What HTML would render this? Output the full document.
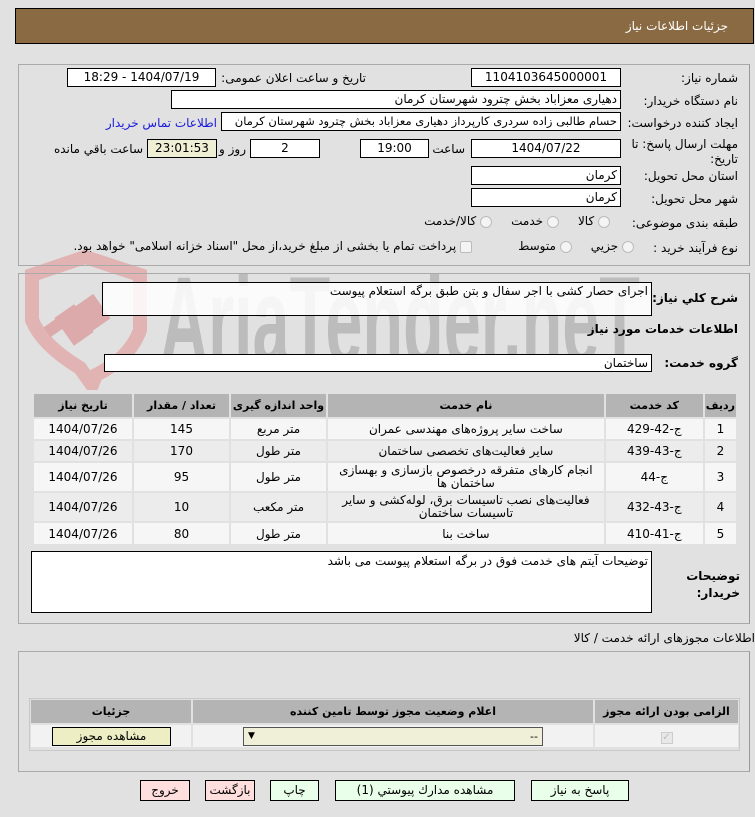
<!DOCTYPE html>
<html><head><meta charset="utf-8"><style>
*{box-sizing:border-box}
body{margin:0;width:755px;height:817px;background:#e1e1e1;font-family:Tahoma,"DejaVu Sans","Liberation Sans",sans-serif;font-size:11px;color:#000;position:relative;overflow:hidden}
.a{position:absolute}
.box{position:absolute;background:#fff;border:1px solid #000;height:19px;line-height:17px;padding:0 3px;direction:rtl;white-space:nowrap;overflow:hidden;font-size:12px}
.c{text-align:center}
.l{position:absolute;direction:rtl;white-space:nowrap;text-align:right;font-size:12px}
.panel{position:absolute;border:1px solid #aaa;border-right-color:#999;left:18px;width:732px}
.b{font-weight:bold}
table{border-collapse:separate;border-spacing:2px;position:absolute;direction:rtl}
th{background:#b4b4b4;font-weight:bold;font-size:11px;height:23px}
td{text-align:center;font-size:12px}
.btn{position:absolute;border:1px solid #000;height:21px;line-height:19px;text-align:center;background:#eaffea;direction:rtl;font-size:12px}
.rad{display:inline-block;width:12px;height:12px;border:1px solid #bbb;border-radius:50%;background:#f4f4f4;vertical-align:middle;position:relative}
</style></head><body>
<div class="a" style="left:15px;top:8px;width:739px;height:36px;background:#8a6a43;border:1px solid #000"></div>
<div class="l" style="right:27px;top:19px;color:#fff;font-size:12px">جزئیات اطلاعات نیاز</div>

<!-- watermark -->
<svg class="a" style="left:0;top:250px" width="700" height="140">
<path d="M32 25 L85 7 L140 25 L140 80 Q130 108 96 125 L92 135 L80 118 Q42 95 32 70 Z" fill="none" stroke="#e2aaaa" stroke-width="14" opacity="0.85"/>
<rect x="45" y="70" width="22" height="12" fill="#dcaaaa" transform="rotate(-35 56 76)"/>
<rect x="62" y="58" width="24" height="34" fill="#dcaaaa" transform="rotate(-35 74 75)"/>
<rect x="80" y="48" width="24" height="30" fill="#dcaaaa" transform="rotate(-35 92 63)"/>
<text x="160" y="114" font-family="Liberation Sans Narrow, Liberation Sans, sans-serif" font-size="125" font-weight="bold" fill="#b4b4b4" opacity="0.8" textLength="480" lengthAdjust="spacingAndGlyphs">AriaTender.neT</text>
</svg>

<div class="panel" style="top:64px;height:202px"></div>
<div class="l" style="right:17px;top:71px">شماره نیاز:</div>
<div class="box c" style="left:471px;top:68px;width:150px">1104103645000001</div>
<div class="l" style="right:389px;top:71px">تاریخ و ساعت اعلان عمومی:</div>
<div class="box c" style="left:67px;top:68px;width:149px">1404/07/19 - 18:29</div>
<div class="l" style="right:17px;top:94px">نام دستگاه خریدار:</div>
<div class="box" style="left:171px;top:90px;width:450px">دهیاری معزاباد بخش چترود شهرستان کرمان</div>
<div class="l" style="right:17px;top:116px">ایجاد کننده درخواست:</div>
<div class="box" style="left:221px;top:112px;width:400px;font-size:11.5px">حسام طالبی زاده سردری کارپرداز دهیاری معزاباد بخش چترود شهرستان کرمان</div>
<div class="l" style="right:538px;top:116px;color:#1a1adc">اطلاعات تماس خریدار</div>
<div class="l" style="right:17px;top:137px;line-height:15px">مهلت ارسال پاسخ: تا<br>تاریخ:</div>
<div class="box c" style="left:471px;top:139px;width:150px">1404/07/22</div>
<div class="l" style="right:290px;top:142px">ساعت</div>
<div class="box c" style="left:360px;top:139px;width:69px">19:00</div>
<div class="box c" style="left:250px;top:139px;width:70px">2</div>
<div class="l" style="right:509px;top:142px">روز و</div>
<div class="box c" style="left:147px;top:139px;width:70px;background:#efefd6">23:01:53</div>
<div class="l" style="right:612px;top:142px">ساعت باقي مانده</div>
<div class="l" style="right:17px;top:169px">استان محل تحویل:</div>
<div class="box" style="left:471px;top:166px;width:150px">کرمان</div>
<div class="l" style="right:17px;top:192px">شهر محل تحویل:</div>
<div class="box" style="left:471px;top:188px;width:150px">کرمان</div>
<div class="l" style="right:17px;top:216px">طبقه بندی موضوعی:</div>
<div class="l" style="right:145px;top:214px"><span class="rad"></span> کالا &nbsp;&nbsp;&nbsp; <span class="rad"></span> خدمت &nbsp;&nbsp;&nbsp; <span class="rad"></span> کالا/خدمت</div>
<div class="l" style="right:17px;top:241px">نوع فرآیند خرید :</div>
<div class="l" style="right:121px;top:239px"><span class="rad"></span> جزيي &nbsp;&nbsp;&nbsp; <span class="rad"></span> متوسط</div>
<div class="l" style="right:283px;top:239px"><span class="rad" style="border-radius:2px"></span> پرداخت تمام یا بخشی از مبلغ خرید،از محل "اسناد خزانه اسلامی" خواهد بود.</div>

<div class="panel" style="top:273px;height:351px"></div>
<div class="l b" style="right:17px;top:291px;font-size:12px">شرح كلي نياز:</div>
<div class="box" style="left:102px;top:282px;width:550px;height:34px;line-height:16px;background:rgba(255,255,255,0.85)">اجرای حصار کشی با اجر سفال و بتن طبق برگه استعلام پیوست</div>
<div class="l b" style="right:17px;top:322px;font-size:12px">اطلاعات خدمات مورد نياز</div>
<div class="l b" style="right:17px;top:356px;font-size:12px">گروه خدمت:</div>
<div class="box" style="left:104px;top:354px;width:548px;height:18px">ساختمان</div>

<table style="left:32px;top:392px;width:706px">
<tr><th style="width:28px">رديف</th><th style="width:97px">کد خدمت</th><th>نام خدمت</th><th style="width:95px">واحد اندازه گیری</th><th style="width:95px">تعداد / مقدار</th><th style="width:98px">تاريخ نياز</th></tr>
<tr style="background:#f6f6f6;height:20px"><td>1</td><td>ج-42-429</td><td>ساخت سایر پروژه‌های مهندسی عمران</td><td>متر مربع</td><td>145</td><td>1404/07/26</td></tr>
<tr style="background:#ececec;height:20px"><td>2</td><td>ج-43-439</td><td>سایر فعالیت‌های تخصصی ساختمان</td><td>متر طول</td><td>170</td><td>1404/07/26</td></tr>
<tr style="background:#f6f6f6;height:28px;line-height:13px"><td>3</td><td>ج-44</td><td>انجام کارهای متفرقه درخصوص بازسازی و بهسازی ساختمان ها</td><td>متر طول</td><td>95</td><td>1404/07/26</td></tr>
<tr style="background:#ececec;height:28px;line-height:13px"><td>4</td><td>ج-43-432</td><td>فعالیت‌های نصب تاسیسات برق، لوله‌کشی و سایر تاسیسات ساختمان</td><td>متر مکعب</td><td>10</td><td>1404/07/26</td></tr>
<tr style="background:#f6f6f6;height:21px"><td>5</td><td>ج-41-410</td><td>ساخت بنا</td><td>متر طول</td><td>80</td><td>1404/07/26</td></tr>
</table>

<div class="l b" style="right:15px;top:568px;font-size:12px;line-height:17px">توضيحات<br>خريدار:</div>
<div class="box" style="left:31px;top:551px;width:621px;height:62px;line-height:18px">توضیحات آیتم های خدمت فوق در برگه استعلام پیوست می باشد</div>

<div class="l" style="right:0;top:631px">اطلاعات مجوزهای ارائه خدمت / كالا</div>
<div class="panel" style="top:651px;height:121px"></div>
<div class="a" style="left:29px;top:698px;width:711px;height:53px;border:1px solid #c8c8c8"></div>
<table style="left:29px;top:698px;width:711px">
<tr><th style="width:143px">الزامی بودن ارائه مجوز</th><th>اعلام وضعیت مجوز توسط تامین کننده</th><th style="width:160px">جزئيات</th></tr>
<tr style="background:#f2f2f2;height:22px"><td><span style="display:inline-block;width:12px;height:12px;border:1px solid #ccc;background:#e8e8e8;color:#bbb;font-size:10px;line-height:10px">✓</span></td><td></td><td></td></tr>
</table>
<div class="a" style="left:243px;top:727px;width:300px;height:19px;border:1px solid #555;background:#f0f0d8;font-size:11px;line-height:17px"><span style="position:absolute;left:4px;font-size:9px">&#9660;</span><span style="position:absolute;right:4px">--</span></div>
<div class="btn" style="left:52px;top:727px;width:119px;height:19px;line-height:17px;background:#eeeec4">مشاهده مجوز</div>

<div class="btn" style="left:531px;top:780px;width:98px">پاسخ به نياز</div>
<div class="btn" style="left:335px;top:780px;width:180px">مشاهده مدارك پيوستي (1)</div>
<div class="btn" style="left:270px;top:780px;width:49px">چاپ</div>
<div class="btn" style="left:205px;top:780px;width:50px;background:#ffdede">بازگشت</div>
<div class="btn" style="left:140px;top:780px;width:50px;background:#ffdede">خروج</div>
</body></html>
